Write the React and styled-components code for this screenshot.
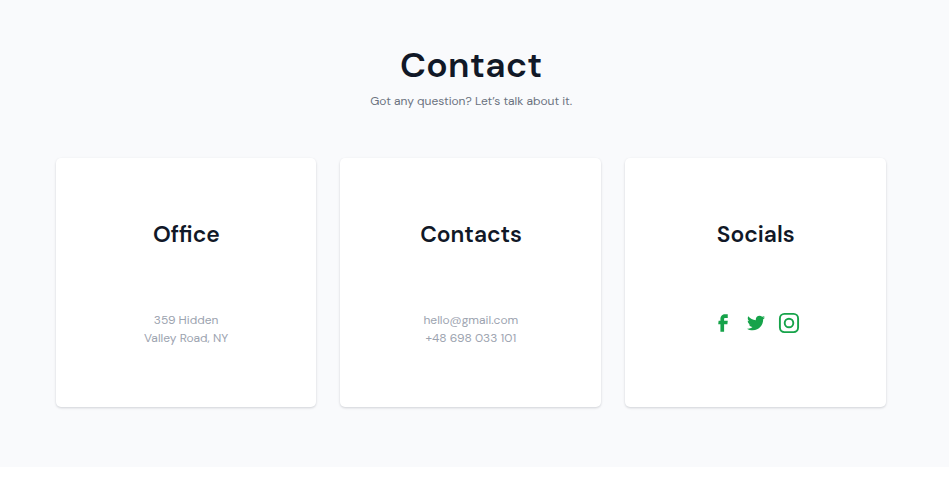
import React from "react";
import styled, { createGlobalStyle } from "styled-components";
import { CgFacebook } from "react-icons/cg";
import { FaTwitter } from "react-icons/fa";

const GlobalStyle = createGlobalStyle`
  *, *::before, *::after { box-sizing: border-box; }
  body { margin: 0; background: #fff; font-family: "DM Sans", Inter, sans-serif; }
  h1, h2, p { margin: 0; }
`;

const Section = styled.section`
  height: 467px;
  padding: 42px 63.2px 0 55.8px;
  background: #f9fafc;
`;

const Header = styled.header`
  padding-left: 0.8px;
  text-align: center;
`;

const Title = styled.h1`
  font-size: 35.5px;
  line-height: 46px;
  font-weight: 630;
  letter-spacing: 0.35px;
  color: #111827;
`;

const Subtitle = styled.p`
  margin-top: 4px;
  font-size: 12px;
  line-height: 18px;
  letter-spacing: -0.02px;
  color: #6b7280;
`;

const Cards = styled.div`
  display: grid;
  grid-template-columns: repeat(3, 1fr);
  gap: 24px;
  margin-top: 48px;
`;

const Card = styled.article`
  height: 249px;
  padding-top: 61px;
  border-radius: 5px;
  background: #fff;
  box-shadow: 0 1px 3px rgba(15, 23, 42, 0.1), 0 1px 2px rgba(15, 23, 42, 0.08);
  text-align: center;
`;

const CardTitle = styled.h2`
  padding-left: 0.5px;
  font-size: 22.8px;
  line-height: 30px;
  font-weight: 570;
  color: #111827;
`;

const CardText = styled.p`
  margin-top: 62px;
  font-size: 12px;
  line-height: 18px;
  color: #9ca3af;
`;

const Socials = styled.div`
  display: flex;
  justify-content: center;
  gap: 11px;
  margin: 63px 0 0 1px;
  color: #16a34a;
`;

const SocialLink = styled.a`
  display: flex;
  align-items: center;
  justify-content: center;
  width: 22px;
  height: 22px;
  color: inherit;
`;

const InstagramIcon = () => (
  <svg width="22" height="22" viewBox="0 0 22 22" fill="none" stroke="currentColor" strokeWidth="1.9">
    <rect x="1.9" y="1.9" width="18.2" height="18.2" rx="4.5" />
    <circle cx="11" cy="11" r="4.3" />
  </svg>
);

export default function App() {
  return (
    <>
      <GlobalStyle />
      <Section>
        <Header>
          <Title>Contact</Title>
          <Subtitle>Got any question? Let’s talk about it.</Subtitle>
        </Header>
        <Cards>
          <Card>
            <CardTitle>Office</CardTitle>
            <CardText>
              359 Hidden
              <br />
              Valley Road, NY
            </CardText>
          </Card>
          <Card>
            <CardTitle>Contacts</CardTitle>
            <CardText>
              hello@gmail.com
              <br />
              +48 698 033 101
            </CardText>
          </Card>
          <Card>
            <CardTitle>Socials</CardTitle>
            <Socials>
              <SocialLink href="#" aria-label="Facebook"><CgFacebook size={22} /></SocialLink>
              <SocialLink href="#" aria-label="Twitter"><FaTwitter size={18} /></SocialLink>
              <SocialLink href="#" aria-label="Instagram"><InstagramIcon /></SocialLink>
            </Socials>
          </Card>
        </Cards>
      </Section>
    </>
  );
}
